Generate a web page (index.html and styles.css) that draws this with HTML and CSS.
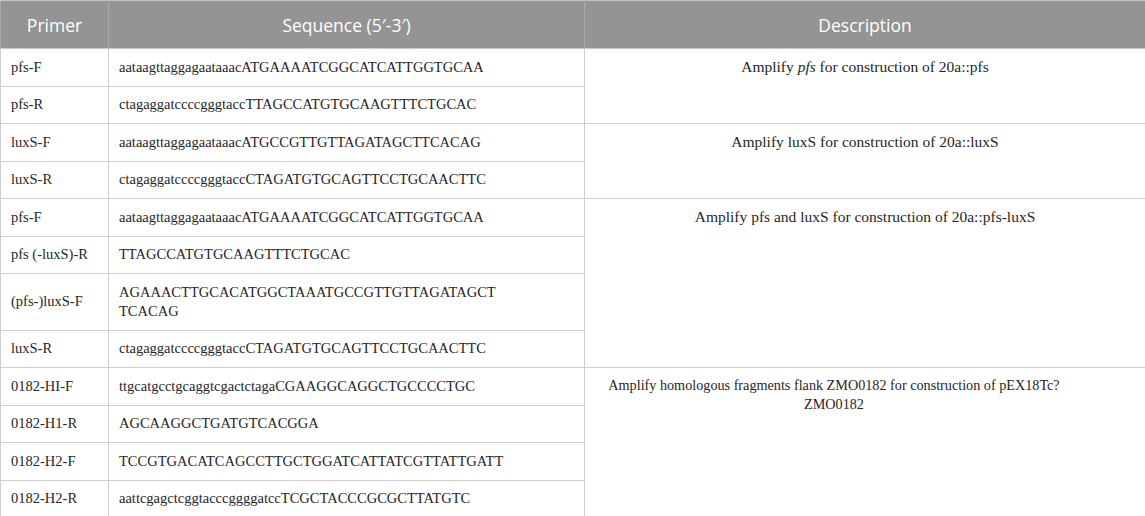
FILE: index.html
```html
<!DOCTYPE html>
<html>
<head>
<meta charset="utf-8">
<link rel="stylesheet" href="styles.css">
</head>
<body>
<table class="primers">
  <colgroup>
    <col class="c1">
    <col class="c2">
    <col class="c3">
  </colgroup>
  <thead>
    <tr class="head">
      <th>Primer</th>
      <th>Sequence (5′-3′)</th>
      <th>Description</th>
    </tr>
  </thead>
  <tbody>
    <tr><td>pfs-F</td><td>aataagttaggagaataaacATGAAAATCGGCATCATTGGTGCAA</td><td class="desc" rowspan="2">Amplify <i>pfs</i> for construction of 20a::pfs</td></tr>
    <tr><td>pfs-R</td><td>ctagaggatccccgggtaccTTAGCCATGTGCAAGTTTCTGCAC</td></tr>
    <tr><td>luxS-F</td><td>aataagttaggagaataaacATGCCGTTGTTAGATAGCTTCACAG</td><td class="desc" rowspan="2">Amplify luxS for construction of 20a::luxS</td></tr>
    <tr><td>luxS-R</td><td>ctagaggatccccgggtaccCTAGATGTGCAGTTCCTGCAACTTC</td></tr>
    <tr><td>pfs-F</td><td>aataagttaggagaataaacATGAAAATCGGCATCATTGGTGCAA</td><td class="desc" rowspan="4">Amplify pfs and luxS for construction of 20a::pfs-luxS</td></tr>
    <tr><td>pfs (-luxS)-R</td><td>TTAGCCATGTGCAAGTTTCTGCAC</td></tr>
    <tr class="tall"><td>(pfs-)luxS-F</td><td>AGAAACTTGCACATGGCTAAATGCCGTTGTTAGATAGCT<br>TCACAG</td></tr>
    <tr><td>luxS-R</td><td>ctagaggatccccgggtaccCTAGATGTGCAGTTCCTGCAACTTC</td></tr>
    <tr><td>0182-HI-F</td><td>ttgcatgcctgcaggtcgactctagaCGAAGGCAGGCTGCCCCTGC</td><td class="desc desc-long" rowspan="4">Amplify homologous fragments flank ZMO0182 for construction of pEX18Tc?<br>ZMO0182</td></tr>
    <tr><td>0182-H1-R</td><td>AGCAAGGCTGATGTCACGGA</td></tr>
    <tr><td>0182-H2-F</td><td>TCCGTGACATCAGCCTTGCTGGATCATTATCGTTATTGATT</td></tr>
    <tr><td>0182-H2-R</td><td>aattcgagctcggtacccggggatccTCGCTACCCGCGCTTATGTC</td></tr>
  </tbody>
</table>
</body>
</html>
```

FILE: styles.css
```css
html, body {
  margin: 0;
  padding: 0;
  background: #ffffff;
}

.primers {
  border-collapse: collapse;
  table-layout: fixed;
  width: 1145px;
  font-family: "Liberation Serif", "Times New Roman", serif;
  font-size: 14.5px;
  color: #262626;
}

.c1 { width: 108px; }
.c2 { width: 476px; }
.c3 { width: 561px; }

.head th {
  background: #949494;
  color: #ffffff;
  font-family: "Open Sans", "Noto Sans", sans-serif;
  font-weight: 400;
  font-size: 17.5px;
  height: 47px;
  padding: 0 10px;
  text-align: center;
  vertical-align: middle;
  border-top: 1px solid #c4c4c4;
  border-left: 1px solid #a8a8a8;
  border-right: 1px solid #a8a8a8;
  border-bottom: 1px solid #c9c9c9;
}

.primers td {
  height: 37.5px;
  padding: 0 10px;
  line-height: 19px;
  border: 1px solid #cfcfcf;
  vertical-align: middle;
  white-space: nowrap;
  box-sizing: border-box;
}

.primers tr.tall td {
  height: 56.5px;
}

.primers td.desc {
  text-align: center;
  vertical-align: top;
  padding-top: 8px;
  font-size: 15.5px;
  white-space: normal;
}

.primers td.desc-long {
  font-size: 14.2px;
  padding-right: 72px;
}
```
